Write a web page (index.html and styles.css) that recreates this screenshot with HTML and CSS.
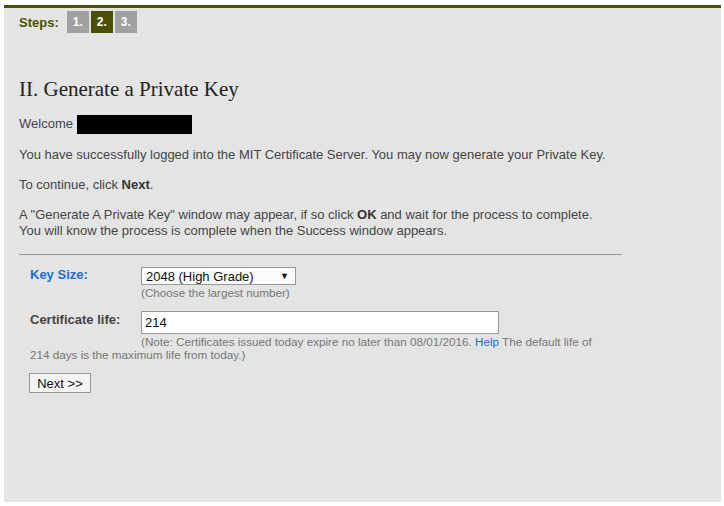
FILE: index.html
```html
<!DOCTYPE html>
<html>
<head>
<meta charset="utf-8">
<link rel="stylesheet" href="styles.css">
</head>
<body>
<div class="panel">
  <div class="steps">
    <span class="steps-label">Steps:</span>
    <span class="step">1.</span>
    <span class="step active">2.</span>
    <span class="step">3.</span>
  </div>
  <h1 class="title">II. Generate a Private Key</h1>
  <p class="welcome">Welcome <span class="redact"></span></p>
  <p class="para">You have successfully logged into the MIT Certificate Server. You may now generate your Private Key.</p>
  <p class="para">To continue, click <b>Next</b>.</p>
  <p class="para">A "Generate A Private Key" window may appear, if so click <b>OK</b> and wait for the process to complete.<br>You will know the process is complete when the Success window appears.</p>
  <div class="rule"></div>
  <div class="form">
    <div class="row">
      <div class="label blue">Key Size:</div>
      <div class="field">
        <div class="select"><span>2048 (High Grade)</span><span class="arrow">&#9660;</span></div>
        <div class="hint">(Choose the largest number)</div>
      </div>
    </div>
    <div class="row row2">
      <div class="label label2">Certificate life:</div>
      <div class="field">
        <div class="input">214</div>
      </div>
    </div>
    <div class="note"><span>(Note: Certificates issued today expire no later than 08/01/2016.</span> <a class="help">Help</a> <span>The default life of</span><br><span>214 days is the maximum life from today.)</span></div>
    <button class="next">Next &gt;&gt;</button>
  </div>
</div>
</body>
</html>
```
FILE: styles.css
```css
html, body { margin: 0; padding: 0; background: #fff; }
body { font-family: "Liberation Sans", Arial, sans-serif; font-size: 13px; color: #444; }
.panel {
  margin: 5px 3px 0 4px;
  height: 497px;
  background: #e4e4e4;
  border-top: 3px solid #4a5200;
  padding: 0 15px;
  box-sizing: border-box;
}
.steps { display: flex; align-items: center; height: 22px; padding-top: 3px; }
.steps-label { color: #4a5200; font-weight: bold; margin-right: 8px; }
.step {
  width: 22px; height: 22px; background: #a0a0a0; color: #fff; font-weight: bold;
  display: flex; align-items: center; justify-content: center; margin-right: 2px; font-size: 12px;
}
.step.active { background: #4a5000; }
.title {
  font-family: "Liberation Serif", "Times New Roman", serif; font-weight: normal;
  font-size: 21px; color: #222; margin: 44px 0 0 0; line-height: 24px;
}
.welcome { margin: 14px 0 0 0; height: 18px; line-height: 18px; display: flex; align-items: center; }
.redact { display: inline-block; width: 115px; height: 19px; background: #000; margin-left: 4px; }
.para { margin: 14px 0 0 0; line-height: 16px; }
.para b { color: #333; }
.rule { width: 603px; border-top: 1px solid #999; margin-top: 15px; }
.form { padding-left: 11px; }
.row { display: flex; margin-top: 12px; }
.row2 { margin-top: 11px; }
.label { width: 111px; font-weight: bold; color: #444; line-height: 15px; }
.label2 { padding-top: 1px; }
.blue { color: #1a6ed4; }
.select {
  width: 155px; height: 18px; box-sizing: border-box; border: 1px solid #999; background: #fbfbfb;
  display: flex; justify-content: space-between; align-items: center; padding: 0 6px 0 4px; color: #111;
}
.arrow { font-size: 9px; }
.hint { color: #777; font-size: 11.7px; line-height: 14px; margin-top: 1px; }
.input {
  width: 358px; height: 23px; box-sizing: border-box; border: 1px solid #999; background: #fff;
  padding: 3px 3px 0 3px; color: #111; line-height: 16px;
}
.note { color: #777; font-size: 11.7px; line-height: 13px; width: 590px; margin-top: 1px; text-indent: 111px; }
.help { color: #1a6ed4; }
.next {
  display: block;
  margin: 12px 0 0 -1px; font-family: "Liberation Sans", Arial, sans-serif; font-size: 13px; color: #111;
  background: #f4f4f4; border: 1px solid #999; height: 20px; padding: 0 7px; width: 62px;
}
```
